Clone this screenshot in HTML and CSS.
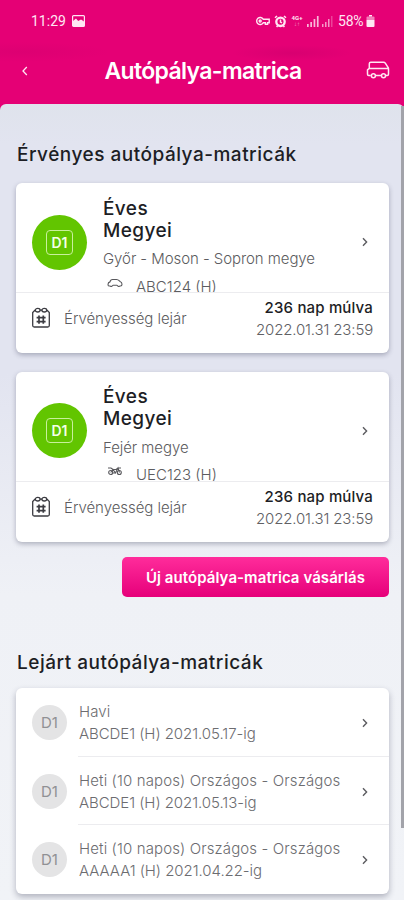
FILE: index.html
```html
<!DOCTYPE html>
<html lang="hu">
<head>
<meta charset="utf-8">
<meta name="viewport" content="width=device-width, initial-scale=1">
<title>Autópálya-matrica</title>
<link rel="stylesheet" href="styles.css">
</head>
<body>
<svg class="defs" width="0" height="0" aria-hidden="true">
  <symbol id="chevron" viewBox="0 0 8 10"><path d="M2 1.2 5.6 5 2 8.8"/></symbol>
  <symbol id="calendar" viewBox="0 0 20 22"><path d="M4.300 3.500H3.700L1.700 5.500V18.500a1.500 1.500 0 0 0 1.500 1.500h13.600a1.500 1.500 0 0 0 1.500-1.500V5.500l-2-2h-.6M8.800 3.200h2.400"/><ellipse cx="6.700" cy="3.200" rx="2.400" ry="1.800"/><ellipse cx="13.300" cy="3.200" rx="2.400" ry="1.800"/><path d="M8 8.500v8.200M12.300 8.500v8.200M5.600 10.600h9M5.600 14.600h9" stroke-width="1.700"/></symbol>
</svg>
<header class="header">
  <div class="status">
    <span class="clock">11:29</span>
    <svg class="photo" width="13" height="12" viewBox="0 0 13 12"><rect x=".6" y=".6" width="11.8" height="10.8" rx="1" fill="none" stroke="currentColor" stroke-width="1.2"/><path d="M1 6 4 3.6 6.2 6 9 4.5l3 2V11H1z" fill="currentColor"/></svg>
    <span class="spacer"></span>
    <svg class="key" width="14" height="10" viewBox="0 0 14 10" fill="none" stroke="currentColor" stroke-width="1.4"><path d="M7.2 3.2A3.5 3.5 0 1 0 7.2 6.8H9.4V8.2H11.6V6.8H13.2V3.2Z"/><circle cx="4.2" cy="5" r="1"/></svg>
    <svg class="alarm" width="13" height="13" viewBox="0 0 13 13" fill="none" stroke="currentColor"><circle cx="6.5" cy="6.8" r="4.2" stroke-width="2.300"/><path d="M6.5 4.5V7L8 8M1 2.8 3 1M12 2.8 10 1M2.6 12l1.2-1.5M10.4 12 9.2 10.5" stroke-width="1.5"/></svg>
    <span class="network"><b>4G+</b><i>↓↑</i></span>
    <svg class="signal" width="12" height="12" viewBox="0 0 12 12" fill="currentColor"><path d="M0 9h1.7v3H0zM3.3 7H5v5H3.300zM6.600 4h1.700v8H6.600zM9.900 1h1.700v11H9.900z"/></svg>
    <svg class="signal weak" width="11" height="12" viewBox="0 0 11 12" fill="currentColor"><path d="M0 9h1.500v3H0zM3 7h1.500v5H3zM6 4h1.500v8H6z"/><path d="M9 1h1.500v11H9z" opacity=".45"/></svg>
    <span class="percent">58%</span>
    <svg class="battery" width="9" height="12" viewBox="0 0 9 12" fill="currentColor"><path d="M3 0h3v1.500H3z"/><path d="M.5 2.500Q.5 1.500 1.500 1.500h6q1 0 1 1V5h-8z" opacity=".55"/><path d="M.5 5h8v6q0 1-1 1h-6q-1 0-1-1z"/></svg>
  </div>
  <div class="bar">
    <svg class="back" width="8" height="10" viewBox="0 0 8 10"><path d="M5.800 1 2 5 5.800 9"/></svg>
    <h1 class="title">Autópálya-matrica</h1>
    <svg class="van" width="24" height="20" viewBox="0 0 24 20"><path d="M4.800 15.500H2.700Q1.500 15.500 1.500 14.300V9.800L3.300 8.300V3.800Q3.300 2.300 4.800 2.300H17.500q1.200 0 1.800.8L22 7.300q.5.700.5 1.700v5.300q0 1.200-1.200 1.200H20M10 15.500h5M3.300 8.600H22.300"/><circle cx="7.400" cy="15.800" r="2"/><circle cx="17.500" cy="15.800" r="2"/></svg>
  </div>
</header>
<main class="sheet">
  <h2 class="heading first">Érvényes autópálya-matricák</h2>
  <article class="card">
    <div class="card-top">
      <div class="badge"><span class="badge-box">D1</span></div>
      <div class="info">
        <h3 class="name">Éves<br>Megyei</h3>
        <p class="region">Győr - Moson - Sopron megye</p>
        <div class="plate">
          <svg class="vehicle" width="16" height="10" viewBox="0 0 16 10"><path d="M3.300 8H2Q1 8 1 6.500C1 4.500 1.700 4.200 3 3.900 3.400 1.900 4 1.500 5.500 1.500h4C11.500 1.500 12 2.600 13 3.500 14.500 4 15 4.500 15 6.300 15 7.500 14.600 8 13.600 8h-.9M5.800 7.300h4.400"/><path d="M3.300 8q1.200 1.200 2.500-.7M10.200 7.300q1.200 1.900 2.500.7"/></svg>
          <span>ABC124 (H)</span>
        </div>
      </div>
      <svg class="chevron" width="8" height="10"><use href="#chevron"/></svg>
    </div>
    <div class="card-bottom">
      <svg class="calendar" width="20" height="22"><use href="#calendar"/></svg>
      <span class="label">Érvényesség lejár</span>
      <div class="expiry"><strong>236 nap múlva</strong><span>2022.01.31 23:59</span></div>
    </div>
  </article>
  <article class="card second">
    <div class="card-top">
      <div class="badge"><span class="badge-box">D1</span></div>
      <div class="info">
        <h3 class="name">Éves<br>Megyei</h3>
        <p class="region">Fejér megye</p>
        <div class="plate">
          <svg class="vehicle" width="16" height="10" viewBox="0 0 16 10"><circle cx="3.700" cy="6.500" r="2"/><circle cx="12.300" cy="6.500" r="2"/><path d="M1 2h3l2 1.500h3L11 2h3M3.700 6.500 6 3.500l2.500 3.500L11 2l1.500 4.500M6 7h3"/></svg>
          <span>UEC123 (H)</span>
        </div>
      </div>
      <svg class="chevron" width="8" height="10"><use href="#chevron"/></svg>
    </div>
    <div class="card-bottom">
      <svg class="calendar" width="20" height="22"><use href="#calendar"/></svg>
      <span class="label">Érvényesség lejár</span>
      <div class="expiry"><strong>236 nap múlva</strong><span>2022.01.31 23:59</span></div>
    </div>
  </article>
  <button class="buy">Új autópálya-matrica vásárlás</button>
  <h2 class="heading expired">Lejárt autópálya-matricák</h2>
  <ul class="list">
    <li class="row"><span class="mini">D1</span><div class="text"><div><p class="kind">Havi</p><p class="until">ABCDE1 (H) 2021.05.17-ig</p></div><svg class="chevron" width="8" height="10"><use href="#chevron"/></svg></div></li>
    <li class="row"><span class="mini">D1</span><div class="text"><div><p class="kind">Heti (10 napos) Országos - Országos</p><p class="until">ABCDE1 (H) 2021.05.13-ig</p></div><svg class="chevron" width="8" height="10"><use href="#chevron"/></svg></div></li>
    <li class="row"><span class="mini">D1</span><div class="text"><div><p class="kind">Heti (10 napos) Országos - Országos</p><p class="until">AAAAA1 (H) 2021.04.22-ig</p></div><svg class="chevron" width="8" height="10"><use href="#chevron"/></svg></div></li>
  </ul>
  <div class="scrollbar"></div>
</main>
</body>
</html>
```
FILE: styles.css
```css
* { box-sizing: border-box; }
html, body { margin: 0; height: 900px; overflow: hidden; }
body {
  display: flex;
  flex-direction: column;
  background: #e20074;
  font-family: Inter, "Liberation Sans", sans-serif;
  color: #1d1e25;
}
h1, h2, h3, p, ul { margin: 0; padding: 0; }
svg { display: block; flex: none; }
.defs { position: absolute; }

.header {
  height: 104px;
  flex: none;
  color: #ffe6f3;
  background:
    radial-gradient(ellipse 60px 8px at 292px 53px, rgba(150, 0, 90, .16), transparent),
    radial-gradient(ellipse 90px 10px at 20px 52px, rgba(150, 0, 90, .1), transparent),
    #e50075;
}
.status {
  display: flex;
  align-items: center;
  height: 42px;
  padding: 0 29px 0 31px;
  font: 14px Roboto, sans-serif;
}
.photo { margin-left: 6px; }
.spacer { flex: 1; }
.key { margin-right: 4px; }
.alarm { margin-right: 4px; }
.network {
  display: flex;
  flex-direction: column;
  align-items: center;
  width: 12px;
  margin-right: 4px;
  font-size: 6px;
  line-height: 6px;
}
.network i { font-style: normal; opacity: .6; }
.signal { margin-right: 3px; opacity: .8; }
.weak { margin-right: 5px; opacity: .65; }
.percent { width: 28px; letter-spacing: -.2px; white-space: nowrap; }

.bar {
  display: flex;
  align-items: center;
  justify-content: space-between;
  height: 58px;
  padding: 0 14px 0 21px;
}
.back { fill: none; stroke: currentColor; stroke-width: 1.3; }
.title { margin-left: 11px; font-size: 23px; line-height: 30px; font-weight: 600; letter-spacing: -.65px; color: #fff; }
.van { margin-top: -2px; fill: none; stroke: currentColor; stroke-width: 1.5; stroke-linejoin: round; }

.sheet {
  position: relative;
  display: flex;
  flex-direction: column;
  flex: 1;
  min-height: 0;
  padding: 0 15px 0 16px;
  border-radius: 6px 6px 0 0;
  background: linear-gradient(#dfe3ec 0, #e2e4f0 40px, #e2e4f0 270px, #eff1f6 490px, #f1f3f7 100%);
}
.heading { font-size: 19px; line-height: 24px; font-weight: 500; letter-spacing: .5px; white-space: nowrap; }
.first { margin: 39px 0 16px 1px; }
.expired { margin: 54px 0 13px 1px; }

.card {
  flex: none;
  height: 170px;
  border-radius: 6px;
  background: #fff;
  box-shadow: 0 2px 5px rgba(40, 45, 70, .32);
}
.second { margin-top: 18.5px; }
.card-top {
  display: flex;
  align-items: center;
  height: 110px;
  padding: 0 20px 0 16px;
  overflow: hidden;
  border-bottom: 1px solid #ececef;
}
.badge {
  display: grid;
  place-items: center;
  flex: none;
  width: 55px;
  height: 55px;
  margin-top: 9px;
  border-radius: 50%;
  background: #62c500;
}
.badge-box {
  display: grid;
  place-items: center;
  width: 27px;
  height: 25px;
  border: 1px solid #c8f09c;
  border-radius: 4px;
  color: #f4ffe8;
  font-size: 14px;
  font-weight: 600;
}
.info { flex: 1; align-self: flex-start; margin-left: 16px; padding-top: 14.7px; }
.name { font-size: 19px; line-height: 22px; font-weight: 500; letter-spacing: .4px; }
.region { margin-top: 7.5px; font-size: 15px; line-height: 20px; font-weight: 300; letter-spacing: -.07px; color: #5c5c60; white-space: nowrap; }
.plate {
  display: flex;
  align-items: flex-start;
  margin-top: 8.8px;
  padding-left: 4px;
  font-size: 15px;
  line-height: 18px;
  font-weight: 300;
  color: #5c5c60;
}
.plate span { margin-left: 13px; }
.vehicle { fill: none; stroke: #58585c; stroke-width: 1.1; }
.chevron { fill: none; stroke: #5c5c60; stroke-width: 1.4; }
.card-top .chevron { margin-top: 9px; }
.card-bottom { display: flex; align-items: flex-start; padding: 4px 16px 0 15px; }
.calendar { margin-top: 10px; fill: none; stroke: #3c3c42; stroke-width: 1.3; }
.label { margin: 12px 0 0 13px; font-size: 15px; line-height: 20px; font-weight: 300; letter-spacing: -.05px; color: #5c5c60; white-space: nowrap; }
.expiry { display: flex; flex-direction: column; align-items: flex-end; margin-left: auto; font-size: 15px; line-height: 22px; white-space: nowrap; }
.expiry strong { font-weight: 500; letter-spacing: .17px; }
.expiry span { font-weight: 300; letter-spacing: -.15px; color: #606064; }

.buy {
  align-self: flex-end;
  flex: none;
  width: 267px;
  height: 40px;
  margin-top: 15.5px;
  padding: 0;
  border: 0;
  border-radius: 5px;
  background: linear-gradient(#ff2c9b, #e6007a);
  color: #fff;
  font: 600 15px Inter, sans-serif;
  letter-spacing: .07px;
  white-space: nowrap;
}
.list {
  flex: none;
  height: 206px;
  list-style: none;
  border-radius: 6px;
  background: #fff;
  box-shadow: 0 3px 6px rgba(40, 45, 70, .32);
}
.row { display: flex; align-items: center; height: 68.7px; padding-left: 16px; }
.mini {
  display: grid;
  place-items: center;
  flex: none;
  width: 35px;
  height: 35px;
  border-radius: 50%;
  background: #e4e4e5;
  color: #909094;
  font-size: 15px;
}
.text {
  display: flex;
  align-items: center;
  justify-content: space-between;
  flex: 1;
  height: 100%;
  margin-left: 11px;
  padding: 2px 20px 0 1px;
  border-bottom: 1px solid #ececef;
  color: #6c6c70;
  font-size: 15px;
  line-height: 22px;
  font-weight: 300;
  white-space: nowrap;
}
.kind { letter-spacing: .12px; }
.until { letter-spacing: -.06px; }
.row:last-child .text { border-bottom-color: transparent; }
.scrollbar { position: absolute; top: 2px; right: 0; width: 3px; height: 722px; background: #a2a3aa; }
```
